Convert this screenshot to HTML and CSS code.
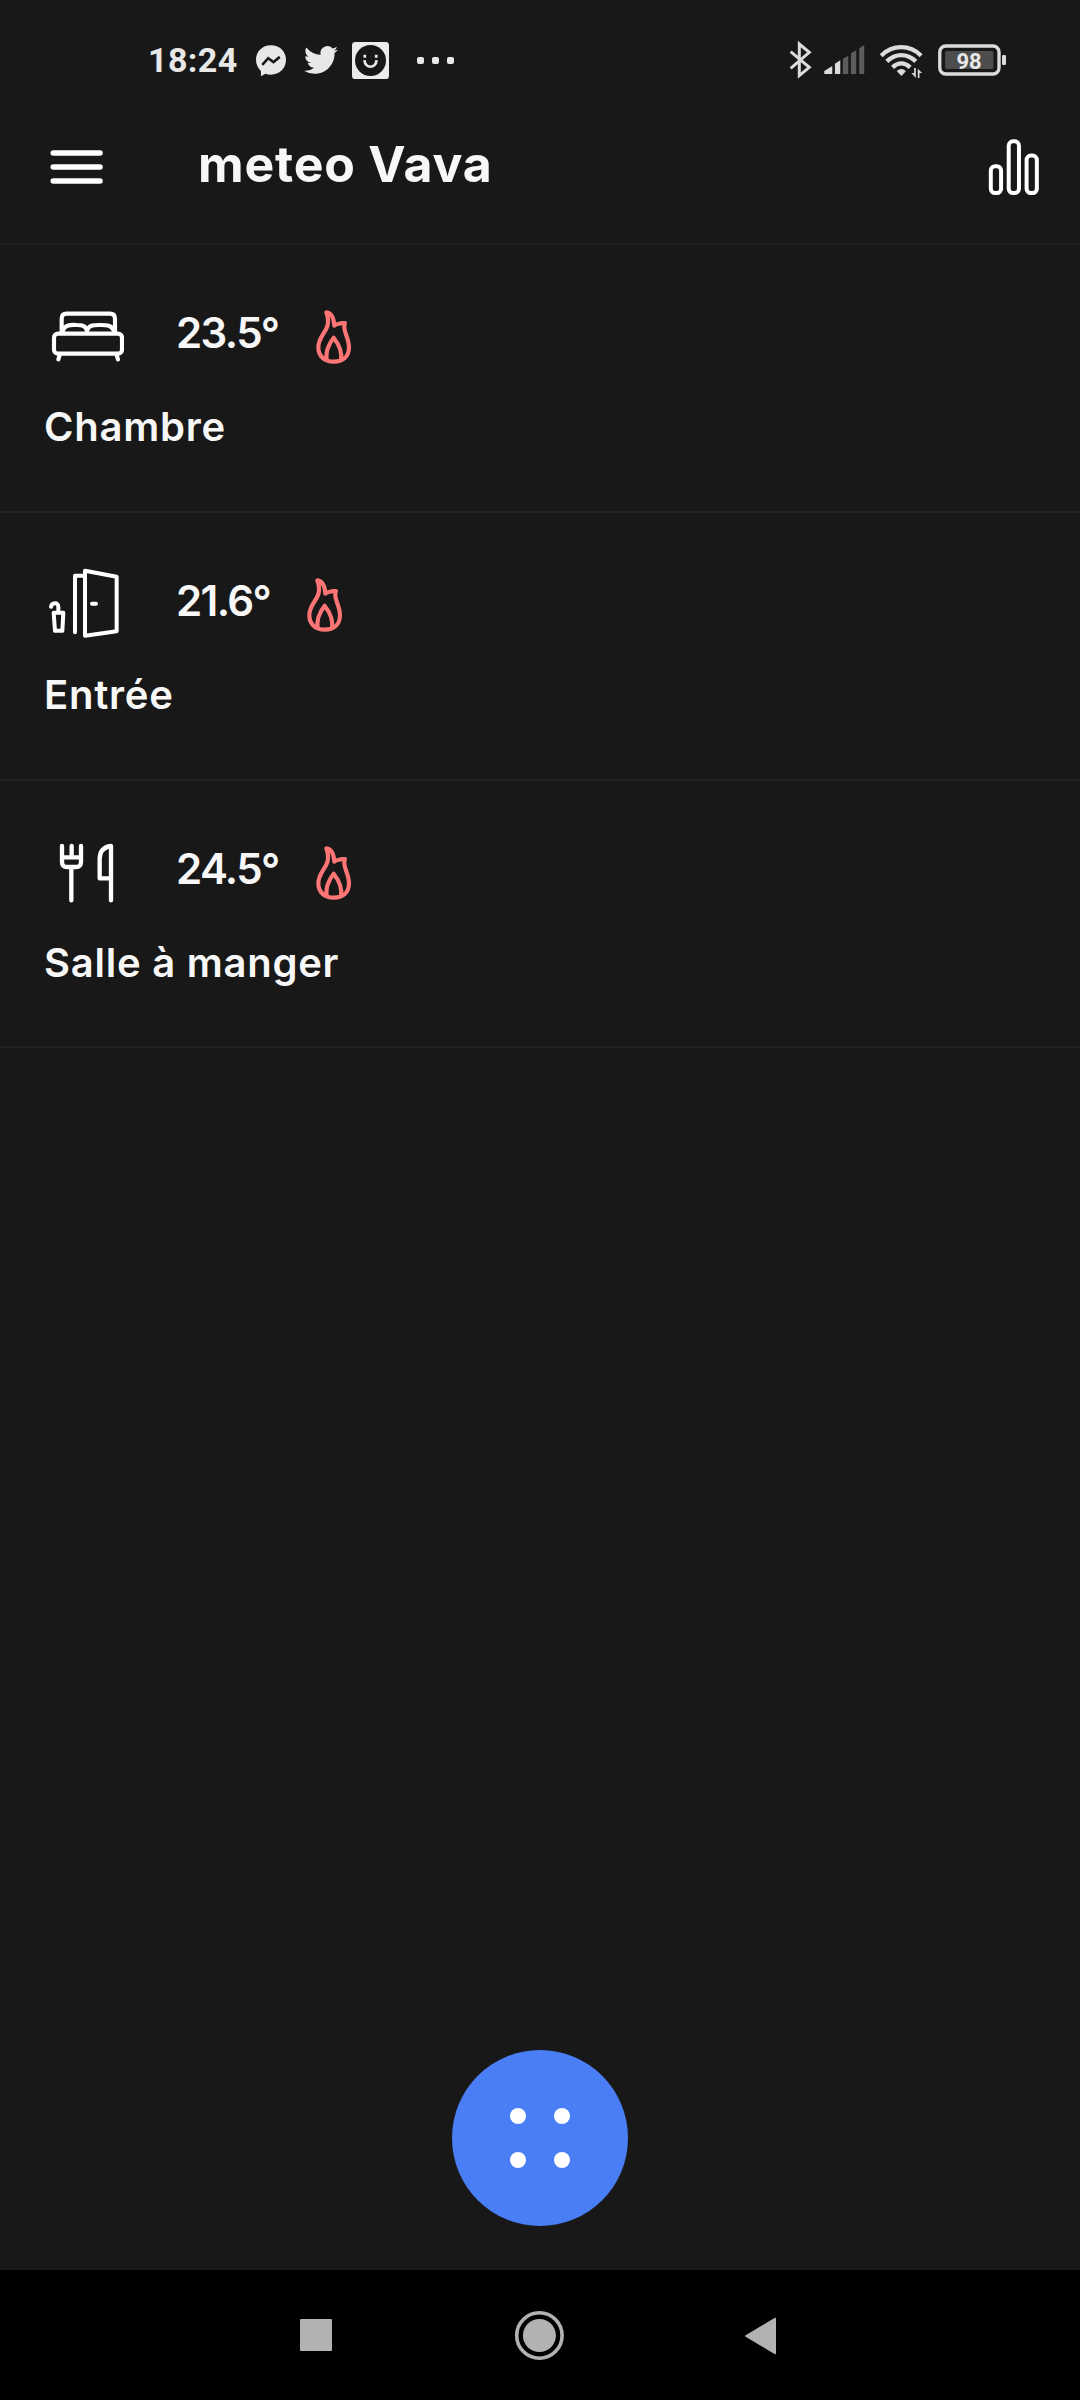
FILE: index.html
```
<!DOCTYPE html>
<html lang="fr">
<head>
<meta charset="utf-8">
<title>meteo Vava</title>
<link rel="stylesheet" href="styles.css">
</head>
<body>
<div class="screen">
  <div class="status">
    <div class="status-left">
      <span class="clock">18:24</span>
      <svg class="s-msg" viewBox="375 55 100 100"><path d="M423 59c-26 0-45 19-45 44 0 14 6 26 15 34v16l14-8c5 2 11 3 16 3 26 0 46-19 46-45s-20-44-46-44z" fill="#e8e8e8"/><path d="M397 118l18-20 16 12 19-16" fill="none" stroke="#181818" stroke-width="8"/></svg>
      <svg class="s-tw" viewBox="0 0 24 24"><path fill="#e8e8e8" d="M23.95 4.57a10 10 0 0 1-2.82.78 4.96 4.96 0 0 0 2.16-2.73c-.95.56-2 .96-3.12 1.19a4.92 4.92 0 0 0-8.39 4.48A13.93 13.93 0 0 1 1.64 3.16a4.92 4.92 0 0 0 1.52 6.57 4.9 4.9 0 0 1-2.23-.61v.06a4.92 4.92 0 0 0 3.95 4.83 5 5 0 0 1-2.21.08 4.94 4.94 0 0 0 4.6 3.42A9.87 9.87 0 0 1 0 19.54a13.99 13.99 0 0 0 7.55 2.21c9.05 0 14-7.5 14-13.98 0-.21 0-.42-.02-.63a9.94 9.94 0 0 0 2.42-2.57z"/></svg>
      <svg class="s-face" viewBox="668 50 110 110"><rect x="668" y="50" width="110" height="110" rx="10" fill="#ececec"/><circle cx="723" cy="105" r="46" fill="#181818"/><path d="M706 88v9M740 88v9M705 104c2 26 34 26 36 0" fill="none" stroke="#e8e8e8" stroke-width="8"/></svg>
      <div class="more"><i></i><i></i><i></i></div>
    </div>
    <div class="status-right">
      <svg class="s-right" viewBox="50 45 670 120">
        <path d="M61 80l56 47-30 25V57l30 25-56 48" fill="none" stroke="#dcdcdc" stroke-width="9"/>
        <path d="M162 147v-9l24-15v24zM194 147v-31l16-10v41z" fill="#dcdcdc"/>
        <path d="M218 147v-46l16-9v55zM242 147V85l16-9v71zM267 147V70l15-10v87z" fill="#5c5c5c"/>
        <g fill="none" stroke="#dcdcdc" stroke-width="13"><path d="M333 92c34-34 86-34 120 0M350 109c26-25 61-25 87 0M367 127c17-16 36-16 53 0"/></g>
        <path d="M380 139c8-9 19-9 27 0l-13 14z" fill="#dcdcdc"/>
        <path d="M424 144h8v-15h5v30zM443 159v-28l13 13h-8v15z" fill="#dcdcdc"/>
        <rect x="509" y="63" width="178" height="84" rx="18" fill="none" stroke="#dcdcdc" stroke-width="10"/>
        <rect x="525" y="78" width="145" height="54" rx="4" fill="#4d4d4d"/>
        <rect x="696" y="90" width="12" height="30" rx="4" fill="#dcdcdc"/>
        <text class="battery" x="597" y="131" text-anchor="middle">98</text>
      </svg>
    </div>
  </div>
  <header class="header">
    <svg class="menu" viewBox="0 0 53 34"><path d="M3.300 3h46.700M3.300 17h46.700M3.300 31h46.700" stroke="#fff" stroke-width="5.600" stroke-linecap="round"/></svg>
    <h1 class="title">meteo Vava</h1>
    <svg class="chart" viewBox="85 55 156 172"><g fill="none" stroke="#fff" stroke-width="12"><rect x="93" y="137" width="31" height="81" rx="13"/><rect x="147" y="62" width="31" height="156" rx="13"/><rect x="201" y="105" width="31" height="113" rx="13"/></g></svg>
  </header>
  <main class="rooms">
    <section class="room">
      <div class="reading">
        <svg class="icon" viewBox="42 30 240 240"><g fill="none" stroke="#fff" stroke-width="12.500" stroke-linejoin="round" stroke-linecap="round"><rect x="72" y="131" width="204" height="60" rx="12"/><path d="M95 127V86c0-10 5-15 15-15h130c10 0 15 5 15 15v41M98 124c5-20 25-20 42-19 19 0 27 3 31 18 5-18 17-18 38-18 20 0 36-1 43 18M90 192l-5 16M259 192l5 16"/></g></svg>
        <span class="temp">23.5°</span>
        <svg class="flame" viewBox="850 55 112 168"><path d="M884 65c20 3 23 22 24 40 6-8 16-4 22-8h10c-10 22 12 39 12 73 0 28-18 43-46 43s-46-17-46-43c0-42 44-50 24-105zM885 211c-4-27 6-51 21-70 15 19 27 43 22 70" fill="none" stroke="#fd7575" stroke-width="12.500" stroke-linejoin="round"/></svg>
      </div>
      <div class="name">Chambre</div>
    </section>
    <section class="room">
      <div class="reading">
        <svg class="icon" viewBox="42 53.500 240 240"><g fill="none" stroke="#fff" stroke-width="12" stroke-linejoin="round" stroke-linecap="round"><path d="M165 62l95 18v163l-95 14zM135 246V77h27M186 161h12M71 188h29l-3 54H75zM85 187v-17c0-15-20-13-22 0"/></g></svg>
        <span class="temp">21.6°</span>
        <svg class="flame" viewBox="850 55 112 168"><path d="M884 65c20 3 23 22 24 40 6-8 16-4 22-8h10c-10 22 12 39 12 73 0 28-18 43-46 43s-46-17-46-43c0-42 44-50 24-105zM885 211c-4-27 6-51 21-70 15 19 27 43 22 70" fill="none" stroke="#fd7575" stroke-width="12.500" stroke-linejoin="round"/></svg>
      </div>
      <div class="name">Entrée</div>
    </section>
    <section class="room">
      <div class="reading">
        <svg class="icon" viewBox="42 45 240 240"><g fill="none" stroke="#fff" stroke-width="13" stroke-linejoin="round" stroke-linecap="round"><path d="M96 75v47c0 10 5 16 15 16h27c10 0 15-6 15-16V75M125 75v32M99 109h51M124 140v98M243 238V75c-24 3-34 17-34 40v57h31"/></g></svg>
        <span class="temp">24.5°</span>
        <svg class="flame" viewBox="850 55 112 168"><path d="M884 65c20 3 23 22 24 40 6-8 16-4 22-8h10c-10 22 12 39 12 73 0 28-18 43-46 43s-46-17-46-43c0-42 44-50 24-105zM885 211c-4-27 6-51 21-70 15 19 27 43 22 70" fill="none" stroke="#fd7575" stroke-width="12.500" stroke-linejoin="round"/></svg>
      </div>
      <div class="name">Salle à manger</div>
    </section>
  </main>
  <div class="actions">
    <div class="fab"><i></i><i></i><i></i><i></i></div>
  </div>
  <nav class="nav">
    <svg viewBox="0 0 1080 130"><g fill="#b2b2b2"><rect x="300" y="49" width="32" height="32" rx="1"/><circle cx="539.400" cy="65.500" r="16.500"/><path d="M746 65l28.500-17q1.500-1 1.500 1v34q0 2-1.500 1l-28.500-17q-2-1 0-2z"/></g><circle cx="539.400" cy="65.500" r="22.700" fill="none" stroke="#b2b2b2" stroke-width="3.600"/></svg>
  </nav>
</div>
</body>
</html>
```
FILE: styles.css
```
* { box-sizing: border-box; }
body { margin: 0; background: #181818; }
svg { display: block; flex: none; }
.screen {
  width: 1080px;
  height: 2400px;
  display: flex;
  flex-direction: column;
  background: #181818;
  color: #f7f7f7;
  font-family: Inter, sans-serif;
}
.status {
  height: 120px;
  padding: 0 66px 0 148px;
  display: flex;
  justify-content: space-between;
  align-items: center;
}
.status-left { display: flex; align-items: center; }
.clock {
  width: 107px;
  font: 700 34px/40px Roboto, sans-serif;
  letter-spacing: 0.4px;
  color: #e8e8e8;
}
.s-msg { width: 33px; height: 33px; }
.s-tw { width: 34px; height: 34px; margin-left: 16px; }
.s-face { width: 37px; height: 37px; margin-left: 14px; }
.more { display: flex; gap: 8px; margin-left: 28px; }
.more i { width: 7px; height: 7px; border-radius: 2px; background: #e8e8e8; }
.s-right { width: 223px; height: 40px; margin-right: 4px; }
.battery { font: 700 66px Roboto, sans-serif; fill: #e8e8e8; }
.header {
  height: 125px;
  padding: 0 40px 0 50px;
  display: flex;
  border-bottom: 2px solid #1f1f1f;
}
.menu { width: 53px; height: 34px; margin-top: 30px; }
.title {
  margin: 10px 0 0 95px;
  flex: 1;
  font-size: 50px;
  line-height: 68px;
  font-weight: 700;
  letter-spacing: 0.8px;
  white-space: nowrap;
}
.chart { width: 52px; height: 57px; margin-top: 18.5px; }
.room {
  height: 267.5px;
  padding: 55px 44px 0;
  border-bottom: 2px solid #222;
}
.room:first-child { height: 268px; }
.reading { display: flex; height: 80px; }
.icon { width: 80px; height: 80px; }
.temp {
  margin: 3px 0 0 52px;
  font-size: 42px;
  line-height: 60px;
  font-weight: 600;
  letter-spacing: -1.6px;
}
.flame { width: 37.3px; height: 56px; margin: 9px 0 0 36px; }
.name {
  font-size: 40px;
  line-height: 60px;
  font-weight: 600;
  letter-spacing: 0.75px;
  margin-top: 17px;
  white-space: nowrap;
}
.actions { flex: 1; display: flex; justify-content: center; align-items: flex-end; padding-bottom: 44px; }
.fab {
  width: 176px;
  height: 176px;
  border-radius: 50%;
  background: #4a7ef4;
  display: grid;
  grid-template-columns: 16px 16px;
  gap: 28px;
  place-content: center;
}
.fab i { width: 16px; height: 16px; border-radius: 50%; background: #fff; }
.nav { height: 130px; background: #000; }
.nav svg { width: 1080px; height: 130px; }
```
